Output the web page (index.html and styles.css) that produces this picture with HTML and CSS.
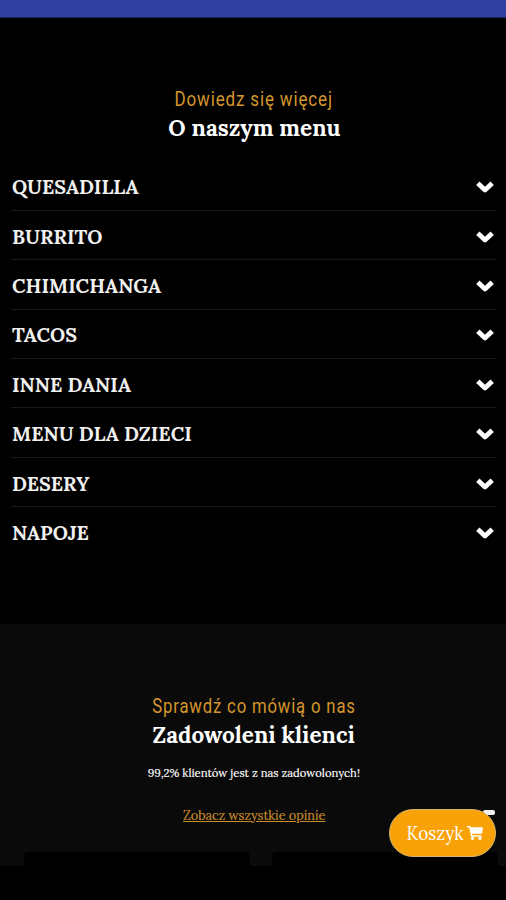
FILE: index.html
```html
<!DOCTYPE html>
<html lang="pl">
<head>
<meta charset="utf-8">
<meta name="viewport" content="width=device-width, initial-scale=1">
<title>Menu</title>
<link rel="stylesheet" href="styles.css">
</head>
<body>
<svg class="symbols" aria-hidden="true">
  <symbol id="chevron" viewBox="0 0 20 14"><path d="M2.8 3.2 L10 10 L17.2 3.2" fill="none" stroke="currentColor" stroke-width="4.8" stroke-linejoin="round"/></symbol>
</svg>
<div class="topbar"></div>
<main>
  <section class="menu">
    <p class="kicker kicker-menu"><span>Dowiedz się więcej</span></p>
    <h2><span>O naszym menu</span></h2>
    <ul class="list">
      <li><span>QUESADILLA</span><svg><use href="#chevron"/></svg></li>
      <li><span>BURRITO</span><svg><use href="#chevron"/></svg></li>
      <li><span>CHIMICHANGA</span><svg><use href="#chevron"/></svg></li>
      <li><span>TACOS</span><svg><use href="#chevron"/></svg></li>
      <li><span>INNE DANIA</span><svg><use href="#chevron"/></svg></li>
      <li><span>MENU DLA DZIECI</span><svg><use href="#chevron"/></svg></li>
      <li><span>DESERY</span><svg><use href="#chevron"/></svg></li>
      <li><span>NAPOJE</span><svg><use href="#chevron"/></svg></li>
    </ul>
  </section>
  <section class="reviews">
    <p class="kicker kicker-reviews"><span>Sprawdź co mówią o nas</span></p>
    <h2><span>Zadowoleni klienci</span></h2>
    <p class="note"><span>99,2% klientów jest z nas zadowolonych!</span></p>
    <a class="all" href="#"><span>Zobacz wszystkie opinie</span></a>
    <div class="cards"><div class="card"></div><div class="card"></div></div>
  </section>
</main>
<div class="next"></div>
<div class="floating">
  <button class="cart"><span>Koszyk</span>
    <svg viewBox="0 0 16 14"><path d="M0 0H3.2L3.6 1.3H16L15 7.8H5L5.3 9.2H14.5V10.7H4.1L2.2 1.4H0Z" fill="currentColor"/><circle cx="5.5" cy="12.3" r="1.6" fill="currentColor"/><circle cx="13" cy="12.3" r="1.6" fill="currentColor"/></svg>
  </button>
</div>
</body>
</html>
```
FILE: styles.css
```css
* { box-sizing: border-box; }
body { margin: 0; height: 900px; overflow: hidden; position: relative; background: #000; color: #fff; font-family: Lora, "Liberation Serif", serif; }
p, h2, ul { margin: 0; padding: 0; }
.symbols { position: absolute; width: 0; height: 0; }
.topbar { height: 18px; background: #303f9f; border-bottom: 1px solid #1c2560; }
.menu { height: 606px; padding: 68px 10px 0 11px; }
.kicker { height: 26px; line-height: 26px; text-align: center; color: #d4962c; font-family: Roboto, sans-serif; font-size: 20px; letter-spacing: 1px; white-space: nowrap; }
.kicker span, h2 span, .note span, .all span { display: inline-block; }
.kicker-menu span { transform: translateX(.5px) scaleX(.85); }
.kicker-reviews span { transform: translateX(1.2px) scaleX(.835); }
h2 { height: 32px; line-height: 32px; text-align: center; font-size: 23px; font-weight: 700; }
h2 span { transform: translateX(.5px) scaleX(.98); }
.list { list-style: none; padding-top: 17.5px; }
.list li { display: flex; align-items: center; justify-content: space-between; height: 49.4px; border-bottom: 1px solid #191919; padding: 2px 1px 0 1px; font-size: 20px; font-weight: 700; white-space: nowrap; color: #f0f0f0; }
.list li span { transform: scaleX(.985); transform-origin: left; }
.list li:last-child { border-bottom: 0; }
.list svg { width: 20px; height: 14px; margin-top: 1px; color: #fff; }
.reviews { height: 242px; padding-top: 69px; background: #0a0a0a; display: flex; flex-direction: column; align-items: center; }
.note { height: 20px; line-height: 20px; margin-top: 12px; font-size: 12px; -webkit-text-stroke: .15px; }
.note span { transform: translateX(1px) scaleX(.94); }
.all { height: 20px; line-height: 20px; margin-top: 23px; font-size: 13px; color: #c98e2c; text-decoration: none; -webkit-text-stroke: .15px; }
.all span { transform: translateX(1px) scaleX(.972); text-decoration: underline; text-underline-offset: 1px; }
.cards { display: flex; gap: 22px; width: 474px; margin: 26px 0 0 15px; }
.card { flex: 1; height: 14px; background: #000; border-radius: 5px 5px 0 0; }
.next { height: 34px; background: #000; }
.floating { position: absolute; left: 389px; top: 809px; isolation: isolate; }
.floating::before { content: ""; position: absolute; left: 94px; top: 1px; width: 12px; height: 5px; border-radius: 2px; background: #f0f0f0; z-index: -1; }
.cart { width: 107px; height: 48px; display: flex; align-items: center; justify-content: center; gap: 2px; padding: 0; border: 1px solid #d6b66c; border-radius: 24px; background: #f9a207; color: #fff; font: 19px Lora, "Liberation Serif", serif; }
.cart span { transform: translateX(-1px) scaleX(.91); transform-origin: right; }
.cart svg { width: 16px; height: 14px; }
```
